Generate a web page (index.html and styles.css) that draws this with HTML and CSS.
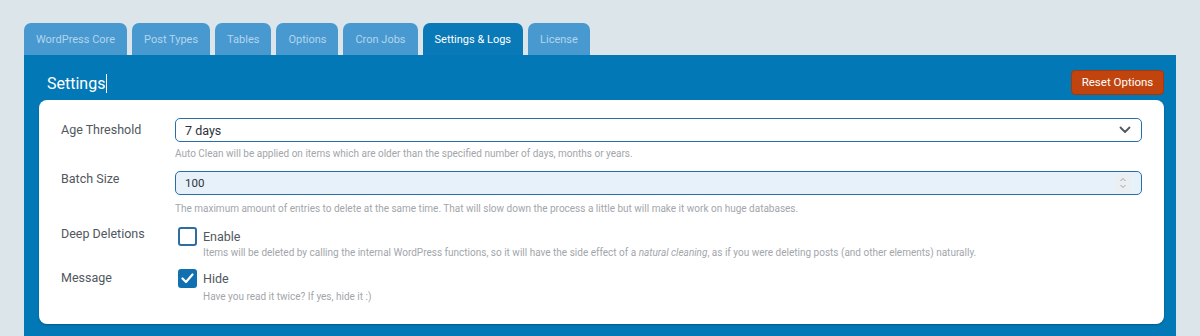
FILE: index.html
```html
<!DOCTYPE html>
<html lang="en">
<head>
    <meta charset="UTF-8">
    <meta name="viewport" content="width=device-width, initial-scale=1.0">
    <title>Settings &amp; Logs</title>
    <link rel="stylesheet" href="styles.css">
</head>
<body>
    <div class="page">
        <!-- Tabs -->
        <div class="tabs">
            <a class="tab" href="#">WordPress Core</a>
            <a class="tab" href="#">Post Types</a>
            <a class="tab" href="#">Tables</a>
            <a class="tab" href="#">Options</a>
            <a class="tab" href="#">Cron Jobs</a>
            <a class="tab active" href="#">Settings &amp; Logs</a>
            <a class="tab" href="#">License</a>
        </div>

        <!-- Panel -->
        <div class="panel">
            <div class="panel-header">
                <h2>Settings<span class="caret"></span></h2>
                <button class="reset-btn" type="button">Reset Options</button>
            </div>

            <div class="card">
                <div class="field first">
                    <label class="field-label">Age Threshold</label>
                    <div class="field-body">
                        <div class="select">
                            <span>7 days</span>
                            <svg class="chevron" width="12" height="8" viewBox="0 0 12 8"><path d="M1.5 1.5 6 6l4.5-4.5" fill="none" stroke="#50575e" stroke-width="1.8" stroke-linecap="round" stroke-linejoin="round"/></svg>
                        </div>
                        <p class="help">Auto Clean will be applied on items which are older than the specified number of days, months or years.</p>
                    </div>
                </div>

                <div class="field second">
                    <label class="field-label">Batch Size</label>
                    <div class="field-body">
                        <div class="number">
                            <span>100</span>
                            <span class="spinner">
                                <svg width="8" height="12" viewBox="0 0 8 12"><path d="M1.5 4 4 1.5 6.5 4M1.5 8 4 10.5 6.5 8" fill="none" stroke="#9aa3ab" stroke-width="1"/></svg>
                            </span>
                        </div>
                        <p class="help">The maximum amount of entries to delete at the same time. That will slow down the process a little but will make it work on huge databases.</p>
                    </div>
                </div>

                <div class="field third">
                    <label class="field-label">Deep Deletions</label>
                    <div class="field-body">
                        <div class="check-row">
                            <span class="checkbox"></span>
                            <span class="check-text">Enable</span>
                        </div>
                        <p class="help indent">Items will be deleted by calling the internal WordPress functions, so it will have the side effect of a <em>natural cleaning</em>, as if you were deleting posts (and other elements) naturally.</p>
                    </div>
                </div>

                <div class="field fourth">
                    <label class="field-label">Message</label>
                    <div class="field-body">
                        <div class="check-row">
                            <span class="checkbox checked">
                                <svg width="13" height="11" viewBox="0 0 13 11"><path d="M1.5 5.5 5 9 11.5 1.5" fill="none" stroke="#fff" stroke-width="2.2" stroke-linecap="round" stroke-linejoin="round"/></svg>
                            </span>
                            <span class="check-text">Hide</span>
                        </div>
                        <p class="help indent">Have you read it twice? If yes, hide it :)</p>
                    </div>
                </div>
            </div>
        </div>
    </div>
</body>
</html>
```

FILE: styles.css
```css
/* Reset */
* {
    margin: 0;
    padding: 0;
    box-sizing: border-box;
}

body {
    font-family: Roboto, "Noto Sans", Arial, sans-serif;
    background-color: #dce6ea;
    color: #3c434a;
}

.page {
    padding: 23px 24px 0 24px;
}

/* Tabs */
.tabs {
    display: flex;
    gap: 5px;
    height: 32px;
}

.tab {
    display: flex;
    align-items: center;
    padding: 0 12px;
    background-color: #4899d0;
    color: #b3d5ee;
    font-size: 11px;
    text-decoration: none;
    border-radius: 7px 7px 0 0;
}

.tab.active {
    background-color: #0a79b7;
    color: #fff;
}

/* Panel */
.panel {
    background-color: #0279b6;
    padding: 0 12px 12px 15px;
}

.panel-header {
    display: flex;
    align-items: center;
    justify-content: space-between;
    height: 45px;
    padding: 0 0 0 8px;
}

.panel-header h2 {
    display: flex;
    align-items: center;
    color: #fff;
    font-size: 16px;
    font-weight: 400;
    margin-top: 11px;
}

.caret {
    display: inline-block;
    width: 1px;
    height: 19px;
    background-color: #fff;
    margin-left: 1px;
}

.reset-btn {
    height: 25px;
    width: 93px;
    margin-top: 9px;
    background-color: #c1440e;
    border: 1px solid #9c3a10;
    border-radius: 4px;
    color: #fff;
    font-family: inherit;
    font-size: 11.5px;
    cursor: pointer;
}

/* Card */
.card {
    background-color: #fff;
    border-radius: 8px;
    padding: 18px 22px 21px 22px;
    box-shadow: 0 1px 2px rgba(0, 0, 0, 0.25);
}

.field {
    display: grid;
    grid-template-columns: 114px 1fr;
}

.field.second {
    margin-top: 11px;
}

.field.third {
    margin-top: 11px;
}

.field.fourth {
    margin-top: 9px;
}

.field-label {
    font-size: 12.5px;
    color: #50575e;
    padding-top: 4px;
}

.field.second .field-label {
    padding-top: 0;
}

.field.third .field-label {
    padding-top: 0;
}

.field.fourth .field-label {
    padding-top: 2px;
}

.select,
.number {
    display: flex;
    align-items: center;
    justify-content: space-between;
    height: 24px;
    border: 1.5px solid #2a6ea6;
    border-radius: 5px;
    padding: 0 10px 0 9px;
    font-size: 12.5px;
    color: #2c3338;
}

.number {
    background-color: #e7f1fa;
    font-size: 11.5px;
    padding-right: 11px;
}

.spinner {
    display: flex;
    align-items: center;
    justify-content: center;
    width: 14px;
    height: 18px;
    background-color: #eceff2;
    border-radius: 2px;
}

.help {
    font-size: 10px;
    line-height: 13px;
    color: #a2a6aa;
    margin-top: 5px;
}

.field.second .help {
    margin-top: 7px;
}

.help.indent {
    margin-left: 28px;
    margin-top: 0;
}

.field.fourth .help.indent {
    margin-top: 2px;
}

.check-row {
    display: flex;
    align-items: center;
    height: 20px;
    margin-left: 3px;
}

.checkbox {
    display: flex;
    align-items: center;
    justify-content: center;
    width: 19px;
    height: 19px;
    border: 2px solid #2c6ea3;
    border-radius: 3px;
    background-color: #fff;
}

.checkbox.checked {
    background-color: #1170b0;
    border-color: #1170b0;
}

.check-text {
    margin-left: 6px;
    font-size: 12.5px;
    color: #50575e;
}
```
